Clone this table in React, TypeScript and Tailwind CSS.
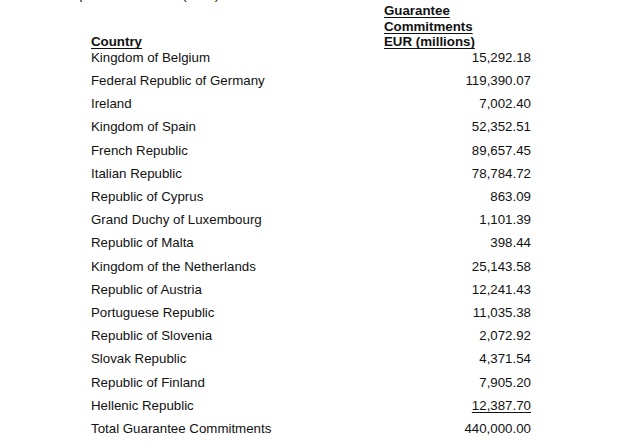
import React from "react";

const rows: { country: string; amount: string; underline?: boolean }[] = [
  { country: "Kingdom of Belgium", amount: "15,292.18" },
  { country: "Federal Republic of Germany", amount: "119,390.07" },
  { country: "Ireland", amount: "7,002.40" },
  { country: "Kingdom of Spain", amount: "52,352.51" },
  { country: "French Republic", amount: "89,657.45" },
  { country: "Italian Republic", amount: "78,784.72" },
  { country: "Republic of Cyprus", amount: "863.09" },
  { country: "Grand Duchy of Luxembourg", amount: "1,101.39" },
  { country: "Republic of Malta", amount: "398.44" },
  { country: "Kingdom of the Netherlands", amount: "25,143.58" },
  { country: "Republic of Austria", amount: "12,241.43" },
  { country: "Portuguese Republic", amount: "11,035.38" },
  { country: "Republic of Slovenia", amount: "2,072.92" },
  { country: "Slovak Republic", amount: "4,371.54" },
  { country: "Republic of Finland", amount: "7,905.20" },
  { country: "Hellenic Republic", amount: "12,387.70", underline: true },
  { country: "Total Guarantee Commitments", amount: "440,000.00" },
];

export default function App() {
  return (
    <div className="h-[443px] w-[640px] overflow-hidden bg-white font-['Liberation_Sans',Arial,sans-serif] text-[13.3px] leading-[15.5px] text-[#111]">
      {/* line above, cut off by the crop */}
      <div className="-mt-[12.6px] pl-[70px] whitespace-nowrap">Up to total amount (EUR)</div>

      <div className="pl-[91px] pt-[0.5px]">
        <div className="grid grid-cols-[293px_147px] items-end">
          <div className="font-bold underline underline-offset-[2px]">Country</div>
          <div className="font-bold">
            <div><span className="underline underline-offset-[2px]">Guarantee</span></div>
            <div><span className="underline underline-offset-[2px]">Commitments</span></div>
            <div><span className="underline underline-offset-[2px]">EUR (millions)</span></div>
          </div>
        </div>

        <div className="flex flex-col gap-[7.7px]">
          {rows.map((r) => (
            <div key={r.country} className="grid grid-cols-[293px_147px]">
              <div>{r.country}</div>
              <div className="text-right">
                <span className={r.underline ? "underline underline-offset-[2px]" : ""}>{r.amount}</span>
              </div>
            </div>
          ))}
        </div>
      </div>
    </div>
  );
}
